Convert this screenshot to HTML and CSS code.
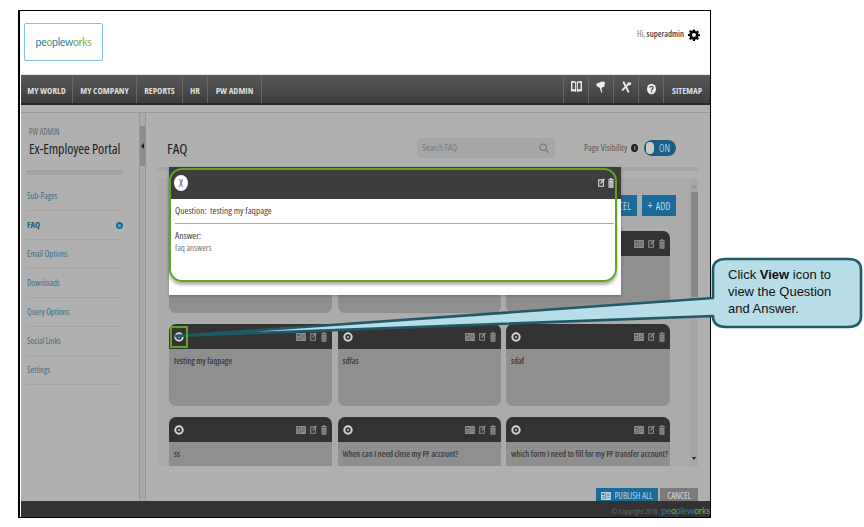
FILE: index.html
```html
<!DOCTYPE html>
<html lang="en">
<head>
<meta charset="utf-8">
<title>FAQ</title>
<link rel="stylesheet" href="styles.css">
</head>
<body>
<svg class="defs" width="0" height="0" aria-hidden="true">
  <symbol id="i-eye" viewBox="0 0 10 10"><circle cx="5" cy="5" r="3.700" fill="none" stroke="currentColor" stroke-width="2"/><circle cx="5" cy="5" r="1" fill="currentColor"/></symbol>
  <symbol id="i-news" viewBox="0 0 11 9"><path fill="currentColor" d="M0 0h11v9H0z"/><path fill="#444" d="M1.500 1.500h2v2h-2zM5 1h.6v7H5zM1.500 5h2.500v.6H1.500zM1.500 6.600h2.500v.6H1.500zM6.600 2h3v.6h-3zM6.600 4h3v.6h-3zM6.600 6h3v.6h-3z"/></symbol>
  <symbol id="i-edit" viewBox="0 0 8 10"><path fill="none" stroke="currentColor" stroke-width="1.200" d="M.8 2h5.400v7.200H.8z"/><path fill="currentColor" d="M2.500 6.800l.3-1.600L6.600.4l1.200 1-3.800 4.800z"/></symbol>
  <symbol id="i-trash" viewBox="0 0 7 11"><path fill="currentColor" d="M2.200 0h2.600v1H7v1.200H0V1h2.200zM.6 3h5.800v8H.6z"/><path fill="#555" d="M2 4.200h.7v5.600H2zM4.300 4.200H5v5.600h-.7z"/></symbol>
</svg>

<div class="frame">
  <header class="top">
    <a class="logo"><span class="b">pe</span><span class="g">o</span><span class="b">plew</span><span class="g">orks</span></a>
    <div class="user">
      <span>Hi, <b>superadmin</b></span>
      <svg class="gear" viewBox="0 0 24 24"><path d="M10 1h4l.6 3.200 1.900.8 2.700-1.900 2.800 2.800-1.900 2.700.8 1.900L24 10v4l-3.100.6-.8 1.900 1.900 2.700-2.800 2.800-2.700-1.900-1.900.8L14 24h-4l-.6-3.100-1.900-.8-2.700 1.900L2 19.200l1.900-2.700-.8-1.900L0 14v-4l3.100-.6.8-1.900L2 4.900 4.800 2.100l2.700 1.900 1.900-.8zM12 8a4 4 0 1 0 0 8 4 4 0 0 0 0-8z" fill-rule="evenodd"/></svg>
    </div>
  </header>

  <nav class="nav">
    <a class="w1">MY WORLD</a><a class="w2">MY COMPANY</a><a class="w3">REPORTS</a><a class="w4">HR</a><a class="w5">PW ADMIN</a>
    <span class="spacer"></span>
    <a class="ic"><svg width="11" height="13" viewBox="0 0 12 13"><path fill="#eee" d="M0 1c2-.8 4-.6 5.600.6v11C4 11.500 2 11.300 0 12zM12 1c-2-.8-4-.6-5.600.6v11C8 11.500 10 11.300 12 12z"/><path fill="#555" d="M1.500 2.500c1-.3 2-.2 3 .3v7c-1-.4-2-.5-3-.3zM10.500 2.500c-1-.3-2-.2-3 .3v7c1-.4 2-.5 3-.3z"/></svg></a>
    <a class="ic"><svg width="10" height="13" viewBox="0 0 11 13"><path fill="#eee" d="M0 4.500C2 1.500 4 3 5 1.500c1.500-1 3.500-.5 5 .5L9 7C7.500 7 6.500 7.500 6 8.500l1 4.500H5.800L4 7.500 2 7z"/></svg></a>
    <a class="ic"><svg width="10" height="14" viewBox="0 0 13 14"><path stroke="#eee" stroke-width="2.600" fill="none" d="M3 0l7 14"/><path stroke="#eee" stroke-width="2.400" fill="none" d="M11 2L1.500 11.500"/><path fill="#eee" d="M8 1h5v3l-3 1z"/></svg></a>
    <a class="ic low"><svg width="9" height="12" viewBox="0 0 11 13"><ellipse cx="5.500" cy="6.500" rx="5.500" ry="6.500" fill="#eee"/><path fill="none" stroke="#444" stroke-width="1.500" d="M3.500 5c0-2.500 4-2.500 4 0 0 1.500-2 1.500-2 3.200"/><path fill="#444" d="M4.700 9.200h1.600v1.500H4.700z"/></svg></a>
    <a class="w6">SITEMAP</a>
  </nav>

  <div class="work">
    <aside class="side">
      <div class="crumb">PW ADMIN</div>
      <h2 class="portal">Ex-Employee Portal</h2>
      <div class="strip"></div>
      <ul class="menu">
        <li>Sub-Pages</li>
        <li class="on">FAQ<i class="dot"></i></li>
        <li>Email Options</li>
        <li>Downloads</li>
        <li>Query Options</li>
        <li>Social Links</li>
        <li>Settings</li>
      </ul>
    </aside>
    <div class="rail"><span class="handle"><i class="caret"></i></span></div>
    <main class="main">
      <div class="title-row">
        <h1 class="faq">FAQ</h1>
        <div class="search"><span>Search FAQ</span>
          <svg width="10" height="10" viewBox="0 0 10 10"><circle cx="4.200" cy="4.200" r="3.200" fill="none" stroke="#777" stroke-width="1.100"/><path stroke="#777" stroke-width="1.200" d="M6.500 6.500L9.500 9.500"/></svg>
        </div>
        <div class="vis">Page Visibility <i class="info">i</i></div>
        <div class="toggle"><i></i><span>ON</span></div>
      </div>
      <div class="band"></div>
      <section class="panel">
        <div class="list">
          <div class="tools">
            <a class="btn">CANCEL</a>
            <a class="btn"><b>+</b> ADD</a>
          </div>
          <div class="grid">
            <article class="card"><div class="head"><svg class="eye"><use href="#i-eye"/></svg><span class="acts"><svg class="a1"><use href="#i-news"/></svg><svg class="a2"><use href="#i-edit"/></svg><svg class="a3"><use href="#i-trash"/></svg></span></div></article>
            <article class="card"><div class="head"><svg class="eye"><use href="#i-eye"/></svg><span class="acts"><svg class="a1"><use href="#i-news"/></svg><svg class="a2"><use href="#i-edit"/></svg><svg class="a3"><use href="#i-trash"/></svg></span></div></article>
            <article class="card"><div class="head"><svg class="eye"><use href="#i-eye"/></svg><span class="acts"><svg class="a1"><use href="#i-news"/></svg><svg class="a2"><use href="#i-edit"/></svg><svg class="a3"><use href="#i-trash"/></svg></span></div></article>

            <article class="card"><div class="head"><svg class="eye"><use href="#i-eye"/></svg><span class="acts"><svg class="a1"><use href="#i-news"/></svg><svg class="a2"><use href="#i-edit"/></svg><svg class="a3"><use href="#i-trash"/></svg></span></div><p>testing my faqpage</p></article>
            <article class="card"><div class="head"><svg class="eye"><use href="#i-eye"/></svg><span class="acts"><svg class="a1"><use href="#i-news"/></svg><svg class="a2"><use href="#i-edit"/></svg><svg class="a3"><use href="#i-trash"/></svg></span></div><p>sdfas</p></article>
            <article class="card"><div class="head"><svg class="eye"><use href="#i-eye"/></svg><span class="acts"><svg class="a1"><use href="#i-news"/></svg><svg class="a2"><use href="#i-edit"/></svg><svg class="a3"><use href="#i-trash"/></svg></span></div><p>sdaf</p></article>

            <article class="card"><div class="head"><svg class="eye"><use href="#i-eye"/></svg><span class="acts"><svg class="a1"><use href="#i-news"/></svg><svg class="a2"><use href="#i-edit"/></svg><svg class="a3"><use href="#i-trash"/></svg></span></div><p>ss</p></article>
            <article class="card"><div class="head"><svg class="eye"><use href="#i-eye"/></svg><span class="acts"><svg class="a1"><use href="#i-news"/></svg><svg class="a2"><use href="#i-edit"/></svg><svg class="a3"><use href="#i-trash"/></svg></span></div><p>When can I need close my PF account?</p></article>
            <article class="card"><div class="head"><svg class="eye"><use href="#i-eye"/></svg><span class="acts"><svg class="a1"><use href="#i-news"/></svg><svg class="a2"><use href="#i-edit"/></svg><svg class="a3"><use href="#i-trash"/></svg></span></div><p>which form I need to fill for my PF transfer account?</p></article>
          </div>
        </div>
        <div class="scroll"><i class="up"></i><span class="thumb"></span><i class="down"></i></div>
      </section>
      <div class="actions">
        <a class="btn publish"><svg class="a1"><use href="#i-news"/></svg> PUBLISH ALL</a>
        <a class="btn cancel">CANCEL</a>
      </div>
    </main>
  </div>

  <footer class="foot">
    <span class="copy">© Copyright 2016</span>
    <span class="flogo"><span class="b">pe</span><span class="g">o</span><span class="b">plew</span><span class="g">orks</span></span>
  </footer>

  <div class="modal">
    <div class="m-head">
      <span class="close">X</span>
      <span class="m-acts"><svg class="a2"><use href="#i-edit"/></svg><svg class="a3"><use href="#i-trash"/></svg></span>
    </div>
    <div class="m-q">Question:&nbsp; testing my faqpage</div>
    <div class="m-a">Answer:<small>faq answers</small></div>
    <div class="ring"></div>
  </div>
</div>

<div class="callout">
  <svg class="shape" width="694" height="100" viewBox="0 0 694 100">
    <path d="M556 5h122q13 0 13 11v46q0 11-13 11H556q-13 0-13-11L6 82 543 44V16q0-11 13-11z" fill="#b7dde8" stroke="#215968" stroke-width="2.600" stroke-linejoin="round"/>
    <rect x="1" y="73" width="16" height="20" fill="none" stroke="#5da423" stroke-width="2"/>
  </svg>
  <p class="note">Click <b>View</b> icon to<br>view the Question<br>and Answer.</p>
</div>
</body>
</html>
```

FILE: styles.css
```css
* { box-sizing: border-box; }
html, body { margin: 0; padding: 0; }
body {
  position: relative;
  width: 864px;
  height: 527px;
  overflow: hidden;
  background: #fff;
  font: condensed 9px "Open Sans", "Liberation Sans", sans-serif;
}
.defs { position: absolute; }
.frame {
  position: relative;
  display: flex;
  flex-direction: column;
  width: 693px;
  height: 508px;
  margin: 10px 0 0 18px;
  padding-left: 1px;
  border: solid #000;
  border-width: 1px 1px 1px 2px;
  background: #fff;
}
.top {
  display: flex;
  justify-content: space-between;
  height: 64px;
  flex: none;
  padding: 12px 10px 0 3px;
  border-bottom: 1px solid #e8e8e8;
}
.logo {
  display: flex;
  align-items: center;
  justify-content: center;
  width: 79px;
  height: 38px;
  border: 1px solid #7cc0e2;
  border-radius: 2px;
  font: 10.500px "Lato", sans-serif;
  letter-spacing: -.3px;
}
.b { color: #1f7fa6; }
.g { color: #79b042; }
.user {
  display: flex;
  gap: 4px;
  align-items: flex-start;
  padding-top: 4px;
  font-size: 8.500px;
  line-height: 14px;
  color: #777;
}
.user b { color: #444; font-weight: 600; }
.gear { width: 12px; height: 16px; fill: #000; }

.nav {
  display: flex;
  align-items: center;
  height: 30px;
  flex: none;
  background: linear-gradient(#585858, #3d3d3d);
  border-bottom: 2px solid #262626;
  font-size: 9px;
  font-weight: 700;
  color: #ddd;
}
.nav a {
  display: flex;
  align-items: center;
  justify-content: center;
  height: 100%;
  padding-top: 3px;
  border-right: 1px solid #666;
  white-space: nowrap;
}
.w1 { width: 52px; }
.w2 { width: 64px; }
.w3 { width: 46px; }
.w4 { width: 25px; }
.w5 { width: 54px; }
.spacer { flex: 1; }
.nav .ic { width: 25px; padding: 0 0 5px; border-left: 1px solid #666; border-right: 0; }
.nav .low { padding-bottom: 1px; }
.nav .w6 { width: 47px; border-right: 0; border-left: 1px solid #666; }

.work {
  display: flex;
  flex: 1;
  min-height: 0;
  margin-top: 7px;
  border-top: 1px solid #999;
  box-shadow: 0 -7px 0 #b0b0b0;
  background: #b0b0b0;
  overflow: hidden;
}
.side { width: 118px; flex: none; padding: 14px 16px 0 5px; }
.crumb { padding-left: 3px; font-size: 8px; line-height: 10px; color: #666; }
.portal { margin: 2px 0 0 3px; font-size: 14px; font-weight: 400; line-height: 20px; letter-spacing: -.1px; white-space: nowrap; color: #222; }
.strip { height: 5px; margin-top: 11px; background: #a3a3a3; }
.menu { margin: 7px 0 0; padding: 0; list-style: none; font-size: 8.500px; line-height: 28px; color: #3f6b88; }
.menu li { display: flex; align-items: center; justify-content: space-between; height: 29px; padding-left: 1px; border-bottom: 1px solid #a6a6a6; }
.menu .on { font-weight: 700; color: #1e5b80; }
.dot { width: 7px; height: 7px; border-radius: 50%; background: #1a6a9a; border: 2px solid #1a6a9a; box-shadow: inset 0 0 0 1px #9cc; }
.rail {
  width: 7px;
  flex: none;
  padding-top: 13px;
  background: #a9a9a9;
  border-left: 1px solid #979797;
  border-right: 1px solid #979797;
}
.handle { display: flex; align-items: center; justify-content: center; height: 40px; background: #8c8c8c; }
.caret { border: solid transparent; border-width: 3px 3px 3px 0; border-right-color: #222; }

.main { flex: 1; min-width: 0; padding: 0 12px 0 11px; }
.title-row { display: flex; align-items: center; height: 54px; padding-top: 15px; }
.faq { width: 250px; margin: 0 0 0 10px; font-size: 15px; font-weight: 400; color: #222; }
.search {
  display: flex;
  align-items: center;
  justify-content: space-between;
  width: 138px;
  height: 20px;
  padding: 0 6px 0 5px;
  border-radius: 5px;
  background: #a6a6a6;
  font-size: 9px;
  color: #777;
}
.vis {
  display: flex;
  align-items: center;
  gap: 4px;
  width: 52px;
  margin-left: 29px;
  font-size: 9.200px;
  white-space: nowrap;
  color: #555;
}
.info { display: inline-block; flex: none; width: 7px; height: 8px; border-radius: 50%; background: #222; color: #bbb; font-size: 6px; font-style: normal; font-weight: 700; line-height: 8px; text-align: center; }
.toggle {
  display: flex;
  align-items: center;
  gap: 5px;
  width: 32px;
  height: 16px;
  margin-left: 8px;
  padding-left: 2px;
  border-radius: 8px;
  background: #1a5e84;
  font-size: 10px;
  color: #a9cfe2;
}
.toggle i { width: 8px; height: 12px; border-radius: 6px; background: #c8c8c8; }
.band { height: 4px; background: #a6a6a6; }
.panel { display: flex; height: 288px; margin-top: 7px; background: #ababab; overflow: hidden; }
.list { flex: 1; min-width: 0; padding: 17px 0 0 12px; }
.tools { display: flex; justify-content: flex-end; gap: 5px; height: 21px; margin: 0 14px 15px 0; }
.btn {
  display: inline-flex;
  align-items: center;
  justify-content: center;
  background: #1a6a9a;
  color: #b9d5e5;
  font-size: 10px;
}
.tools .btn { width: 34px; }
.tools .btn:first-child { width: 40px; letter-spacing: .3px; }
.tools b { font-size: 12px; font-weight: 400; margin-right: 3px; }
.grid { display: grid; grid-template-columns: 163px 163px 164px; column-gap: 5.500px; row-gap: 11px; grid-auto-rows: 82px; }
.card { border-radius: 7px; background: #8f8f8f; color: #3a3a3a; overflow: hidden; }
.head {
  display: flex;
  align-items: center;
  justify-content: space-between;
  height: 25px;
  padding: 0 5px;
  background: #333;
  color: #8d8d8d;
}
.eye { width: 10px; height: 10px; color: #d5d5d5; }
.acts { display: flex; align-items: center; gap: 4px; }
.a1 { width: 10px; height: 8px; }
.a2 { width: 7px; height: 9px; }
.a3 { width: 6px; height: 10px; }
.card p { margin: 0; padding: 6px 5px; font-size: 8.400px; font-weight: 600; line-height: 12px; white-space: nowrap; }
.scroll { position: relative; width: 8px; margin-top: 2px; background: #a6a6a6; }
.thumb { display: block; height: 105px; margin: 12px 0 0 1px; background: #888; }
.up, .down { position: absolute; left: 2px; border: solid transparent; border-width: 0 2px; }
.up { top: 5px; border-bottom: 3px solid #888; }
.down { bottom: 6px; border-top: 3px solid #222; }
.actions { display: flex; justify-content: flex-end; gap: 2px; height: 30px; margin-top: 22px; }
.publish { gap: 3px; width: 62px; height: 30px; align-items: flex-start; padding-top: 2px; font-size: 8.800px; }
.publish .a1 { margin-top: 2px; }
.cancel { width: 38px; height: 30px; align-items: flex-start; padding-top: 2px; background: #7b7b7b; color: #ddd; font-size: 8.800px; }

.foot {
  display: flex;
  align-items: flex-end;
  justify-content: flex-end;
  gap: 4px;
  height: 16px;
  flex: none;
  background: #333;
}
.copy { font-size: 7.500px; line-height: 12px; color: #666; }
.flogo { font: 9px/12px "Lato", sans-serif; letter-spacing: -.2px; }

.modal {
  position: absolute;
  left: 149px;
  top: 156px;
  width: 452px;
  height: 128px;
  background: #fff;
  box-shadow: 0 1px 3px rgba(0, 0, 0, .25);
}
.m-head { display: flex; align-items: center; justify-content: space-between; height: 32px; padding: 0 7px 0 5px; background: #3d3d3d; color: #ddd; }
.close { width: 14px; height: 16px; border-radius: 50%; background: #fff; color: #555; font-size: 10px; line-height: 16px; text-align: center; }
.m-acts { display: flex; gap: 3px; }
.m-q { height: 25px; margin: 0 7px 0 6px; border-bottom: 1px solid #aaa; font-size: 9.500px; line-height: 24px; color: #444; }
.m-a { padding: 5px 0 0 6px; font-size: 9.500px; line-height: 13px; color: #444; }
.m-a small { display: block; font-size: 8.800px; color: #777; }
.ring {
  position: absolute;
  left: 0;
  top: 1px;
  width: 448px;
  height: 114px;
  border: 2px solid #5da423;
  border-radius: 13px;
  box-shadow: 0 3px 3px rgba(0, 0, 0, .3);
}

.callout { position: absolute; left: 170px; top: 254px; width: 694px; height: 100px; }
.shape { display: block; }
.note {
  position: absolute;
  left: 558px;
  top: 12px;
  margin: 0;
  font: 13px/17px "Liberation Sans", sans-serif;
  color: #111;
  white-space: nowrap;
}
```
